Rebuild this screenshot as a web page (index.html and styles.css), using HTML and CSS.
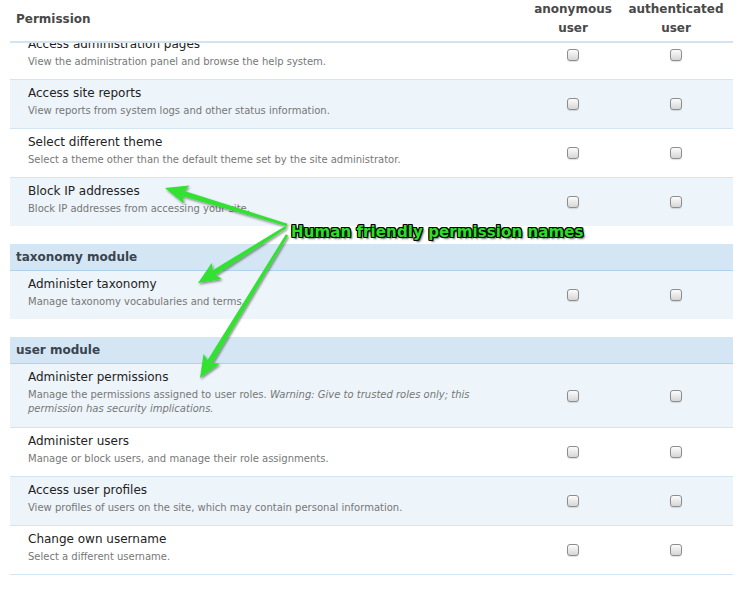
FILE: index.html
```html
<!DOCTYPE html>
<html lang="en">
<head>
    <meta charset="UTF-8">
    <meta name="viewport" content="width=device-width, initial-scale=1.0">
    <title>Permissions</title>
    <link rel="stylesheet" href="styles.css">
</head>
<body>
    <div class="perm-table">
        <div class="perm-head">
            <div class="th">Permission</div>
            <div class="th role">anonymous<br>user</div>
            <div class="th role">authenticated<br>user</div>
        </div>
        <div class="perm-body">
            <div class="row first">
                <div class="perm"><div class="title">Access administration pages</div><div class="desc">View the administration panel and browse the help system.</div></div>
                <div class="cell"><input type="checkbox" class="box"></div>
                <div class="cell"><input type="checkbox" class="box"></div>
            </div>
            <div class="row alt">
                <div class="perm"><div class="title">Access site reports</div><div class="desc">View reports from system logs and other status information.</div></div>
                <div class="cell"><input type="checkbox" class="box"></div>
                <div class="cell"><input type="checkbox" class="box"></div>
            </div>
            <div class="row">
                <div class="perm"><div class="title">Select different theme</div><div class="desc">Select a theme other than the default theme set by the site administrator.</div></div>
                <div class="cell"><input type="checkbox" class="box"></div>
                <div class="cell"><input type="checkbox" class="box"></div>
            </div>
            <div class="row alt last">
                <div class="perm"><div class="title">Block IP addresses</div><div class="desc">Block IP addresses from accessing your site.</div></div>
                <div class="cell"><input type="checkbox" class="box"></div>
                <div class="cell"><input type="checkbox" class="box"></div>
            </div>

            <div class="module">taxonomy module</div>
            <div class="row alt last">
                <div class="perm"><div class="title">Administer taxonomy</div><div class="desc">Manage taxonomy vocabularies and terms.</div></div>
                <div class="cell"><input type="checkbox" class="box"></div>
                <div class="cell"><input type="checkbox" class="box"></div>
            </div>

            <div class="module">user module</div>
            <div class="row alt tall">
                <div class="perm"><div class="title">Administer permissions</div><div class="desc">Manage the permissions assigned to user roles. <em>Warning: Give to trusted roles only; this<br>permission has security implications.</em></div></div>
                <div class="cell"><input type="checkbox" class="box"></div>
                <div class="cell"><input type="checkbox" class="box"></div>
            </div>
            <div class="row">
                <div class="perm"><div class="title">Administer users</div><div class="desc">Manage or block users, and manage their role assignments.</div></div>
                <div class="cell"><input type="checkbox" class="box"></div>
                <div class="cell"><input type="checkbox" class="box"></div>
            </div>
            <div class="row alt">
                <div class="perm"><div class="title">Access user profiles</div><div class="desc">View profiles of users on the site, which may contain personal information.</div></div>
                <div class="cell"><input type="checkbox" class="box"></div>
                <div class="cell"><input type="checkbox" class="box"></div>
            </div>
            <div class="row">
                <div class="perm"><div class="title">Change own username</div><div class="desc">Select a different username.</div></div>
                <div class="cell"><input type="checkbox" class="box"></div>
                <div class="cell"><input type="checkbox" class="box"></div>
            </div>
        </div>
    </div>

    <!-- annotation arrows drawn over the table -->
    <svg class="arrows" width="746" height="591" viewBox="0 0 746 591">
        <defs>
            <filter id="shade" x="-20%" y="-20%" width="140%" height="140%">
                <feDropShadow dx="1" dy="1.5" stdDeviation="1.2" flood-color="#000" flood-opacity="0.45"/>
            </filter>
        </defs>
        <g fill="#33e133" filter="url(#shade)">
            <path transform="translate(287 225) rotate(196.87)" d="M0,-1.3 L108,-2.8 L105,-9.5 L127.5,0 L105,9.5 L108,2.8 L0,1.3 Z"/>
            <path transform="translate(286 227) rotate(147.53)" d="M0,-1.3 L85,-2.8 L82,-9.5 L104.3,0 L82,9.5 L85,2.8 L0,1.3 Z"/>
            <path transform="translate(287 235) rotate(121.32)" d="M0,-1.3 L148,-2.8 L145,-9.5 L167.4,0 L145,9.5 L148,2.8 L0,1.3 Z"/>
        </g>
    </svg>
    <div class="callout">Human friendly permission names</div>
</body>
</html>
```

FILE: styles.css
```css
body {
    margin: 0;
    padding: 0;
    background: #fff;
    font-family: "DejaVu Sans", Verdana, sans-serif;
    color: #333;
}
.perm-table {
    width: 723px;
    margin-left: 10px;
}
.perm-head, .row {
    display: grid;
    grid-template-columns: 1fr 92px 114px;
}
.perm-head {
    height: 35px;
    padding-bottom: 6px;
    border-bottom: 2px solid #d3e4f1;
    align-items: center;
}
.th {
    font-size: 12px;
    font-weight: bold;
    line-height: 19px;
    color: #494949;
}
.th:first-child {
    padding-left: 6px;
}
.th.role {
    text-align: center;
}
.perm-body {
    overflow: hidden;
}
.row {
    border-bottom: 1px solid #d3e5f2;
    align-items: center;
}
.row.alt {
    background-color: #edf4fa;
}
.row.first {
    margin-top: -12px;
}
.row.last {
    border-bottom: none;
    margin-bottom: 18px;
}
.perm {
    padding: 6px 0 10px 18px;
}
.row.tall .perm {
    padding-bottom: 11px;
}
.title {
    font-size: 12px;
    line-height: 15px;
    color: #222;
}
.desc {
    margin-top: 3px;
    font-size: 10px;
    line-height: 14px;
    color: #777;
}
.desc em {
    font-style: italic;
}
.cell {
    display: flex;
    justify-content: center;
    align-items: center;
}
.box {
    appearance: none;
    -webkit-appearance: none;
    width: 12px;
    height: 12px;
    margin: 0;
    border: 1px solid #8d8d8d;
    border-radius: 3px;
    background: linear-gradient(#fcfcfc, #e9e9e9 50%, #d6d6d6);
    box-shadow: 0 1px 1px rgba(0, 0, 0, 0.12);
}
.module {
    height: 27px;
    padding: 5px 0 0 6px;
    box-sizing: border-box;
    background-color: #d4e6f3;
    border-bottom: 1px solid #b0d2ec;
    font-size: 12px;
    font-weight: bold;
    line-height: 16px;
    color: #3a4450;
}
.arrows {
    position: absolute;
    top: 0;
    left: 0;
    pointer-events: none;
}
.callout {
    position: absolute;
    left: 291px;
    top: 222px;
    font-family: "DejaVu Sans", sans-serif;
    font-weight: bold;
    font-size: 15px;
    line-height: 20px;
    letter-spacing: 0.1px;
    color: #27e027;
    text-shadow: 1px 0 0 #000, -1px 0 0 #000, 0 1px 0 #000, 0 -1px 0 #000,
        1px 1px 0 #000, -1px -1px 0 #000, 1px -1px 0 #000, -1px 1px 0 #000,
        2px 2px 2px rgba(0, 0, 0, 0.6);
}
```
